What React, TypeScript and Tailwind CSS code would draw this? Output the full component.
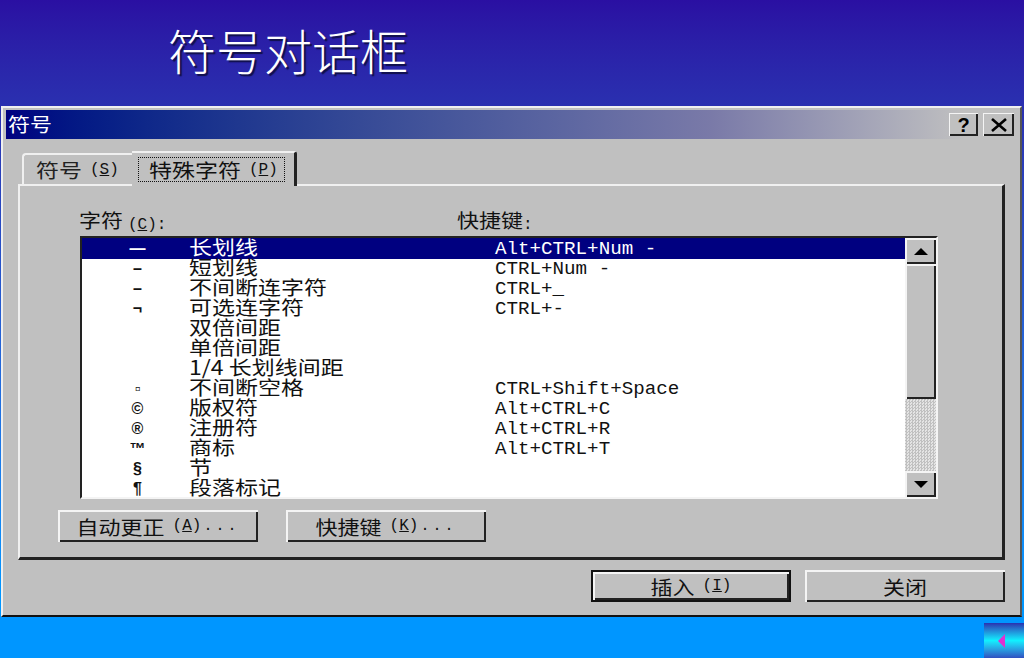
import type { ReactNode } from 'react'

const CJK = "font-['Noto_Sans_CJK_SC','Liberation_Sans',sans-serif]"

const ROWS = [
  { sym: '—', name: '长划线', keys: 'Alt+CTRL+Num -' },
  { sym: '–', name: '短划线', keys: 'CTRL+Num -' },
  { sym: '–', name: '不间断连字符', keys: 'CTRL+_' },
  { sym: '¬', name: '可选连字符', keys: 'CTRL+-' },
  { sym: '', name: '双倍间距', keys: '' },
  { sym: '', name: '单倍间距', keys: '' },
  { sym: '', name: '1/4 长划线间距', keys: '' },
  { sym: '▫', name: '不间断空格', keys: 'CTRL+Shift+Space' },
  { sym: '©', name: '版权符', keys: 'Alt+CTRL+C' },
  { sym: '®', name: '注册符', keys: 'Alt+CTRL+R' },
  { sym: '™', name: '商标', keys: 'Alt+CTRL+T' },
  { sym: '§', name: '节', keys: '' },
  { sym: '¶', name: '段落标记', keys: '' },
]

// the bitmap font in the picture is wider than tall
function Sq({ children }: { children: ReactNode }) {
  return <span className="inline-block scale-y-[.86]">{children}</span>
}

// "(S)" style access key, small and underlined
function Hot({ k }: { k: string }) {
  return (
    <span className="font-['Liberation_Mono',monospace] text-[16px] text-[#111] ml-2">
      (<span className="underline">{k}</span>)
    </span>
  )
}

function Dots() {
  return <span className="font-['Liberation_Mono',monospace] text-[15px] tracking-[3px] ml-[2px]">...</span>
}

function Btn({ children, w = 'w-[200px]' }: { children: ReactNode; w?: string }) {
  return (
    <div className={`${w} h-[32px] flex items-center justify-center bg-[#c0c0c0] text-[22px] leading-none text-[#111] shadow-[inset_2px_2px_0_#f4f4f4,inset_-2px_-2px_0_#222]`}>
      {children}
    </div>
  )
}

export default function App() {
  return (
    <div className={`w-[1024px] h-[658px] overflow-hidden flex flex-col bg-gradient-to-b from-[#2a30b0] from-[16%] to-[#0096ff] to-[90%] ${CJK}`}>
      <div className="h-[106px] shrink-0 pl-[168px] pt-[19px] bg-gradient-to-b from-[#2a0fa2] to-[#2a30b0]">
        <h1 className="text-[48px] leading-[60px] font-light text-white [text-shadow:2px_2px_1px_#10104a]">符号对话框</h1>
      </div>

      <div className="h-[511px] shrink-0 ml-[1px] mr-[2px] bg-[#c0c0c0] border-t-2 border-l-2 border-t-[#f0f0f0] border-l-[#f0f0f0] border-b-2 border-b-[#111] border-r-2 border-r-[#555] pt-[2px] pl-[3px] pr-[2px] flex flex-col">
        <div className="h-[29px] shrink-0 mr-[3px] flex items-center justify-between bg-gradient-to-r from-[#000080] via-[#7a7aa8] via-70% to-[#c0c0c0] to-95%">
          <span className="text-white text-[22px] leading-none pl-[2px] pb-[4px]"><Sq>符号</Sq></span>
          <div className="flex gap-[5px] pr-[1px]">
            <div className="w-[29px] h-[23px] flex items-center justify-center bg-[#c0c0c0] text-black font-bold text-[20px] font-['Liberation_Sans',sans-serif] shadow-[inset_1px_1px_0_#f4f4f4,inset_-2px_-2px_0_#222]">?</div>
            <div className="w-[31px] h-[23px] flex items-center justify-center bg-[#c0c0c0] shadow-[inset_1px_1px_0_#f4f4f4,inset_-2px_-2px_0_#222]">
              <svg width="18" height="14" viewBox="0 0 18 14"><path d="M2 1L16 13M16 1L2 13" stroke="#000" strokeWidth="2.6" /></svg>
            </div>
          </div>
        </div>

        {/* tabs */}
        <div className="h-[45px] shrink-0 ml-[12px] flex items-end relative z-10">
          <div className="ml-[4px] w-[110px] h-[31px] bg-[#c0c0c0] border-t-2 border-l-2 border-[#f0f0f0] rounded-tl-[4px] flex items-center pl-[12px] text-[23px] leading-none text-[#222]">
            <Sq>符号</Sq><Hot k="S" />
          </div>
          <div className="w-[165px] h-[35px] -mb-[2px] bg-[#c0c0c0] border-t-2 border-[#f0f0f0] border-r-[3px] border-r-[#222] rounded-tr-[3px] flex items-center pl-[6px]">
            <div className="w-[147px] h-[25px] border border-dotted border-[#111] flex items-center pl-[10px] text-[23px] leading-none text-[#111] whitespace-nowrap">
              <Sq>特殊字符</Sq><Hot k="P" />
            </div>
          </div>
        </div>

        <div className="h-[376px] shrink-0 ml-[12px] mr-[13px] border-t-2 border-l-2 border-[#f0f0f0] border-r-[3px] border-r-[#222] border-b-[3px] border-b-[#222] px-[60px] flex flex-col">
          <div className="h-[50px] shrink-0 -ml-[1px] flex items-end pb-[3px] text-[22px] text-[#111] leading-none">
            <div className="w-[378px]"><Sq>字符</Sq> <span className="font-['Liberation_Mono',monospace] text-[16px]">(<span className="underline">C</span>):</span></div>
            <div><Sq>快捷键</Sq><span className="font-['Liberation_Mono',monospace] text-[16px]">:</span></div>
          </div>

          <div className="w-[858px] h-[263px] shrink-0 border-t-2 border-l-2 border-[#222] border-r-2 border-r-[#f4f4f4] border-b-2 border-b-[#f4f4f4] bg-white flex overflow-hidden">
            <div className="w-[823px] shrink-0 overflow-hidden">
              {ROWS.map((r, i) => (
                <div key={i} className={`h-[20px] flex items-center whitespace-nowrap ${i === 0 ? 'h-[21px] bg-[#000080] text-white' : 'text-[#111]'}`}>
                  <div className="w-[107px] shrink-0 pl-[42px] text-[16px] font-bold leading-[20px] text-center pr-[38px] font-['Liberation_Sans',sans-serif]">{r.sym}</div>
                  <div className="w-[306px] shrink-0 text-[23px] leading-[20px] pb-[6px]"><Sq>{r.name}</Sq></div>
                  <div className="font-['Liberation_Mono',monospace] text-[19.2px] leading-[20px]">{r.keys}</div>
                </div>
              ))}
            </div>
            <div className="w-[31px] shrink-0 flex flex-col">
              <div className="h-[26px] shrink-0 bg-[#c0c0c0] flex items-center justify-center shadow-[inset_2px_2px_0_#f4f4f4,inset_-2px_-2px_0_#222]">
                <div className="w-0 h-0 border-x-[7px] border-x-transparent border-b-[7px] border-b-black" />
              </div>
              <div className="h-[135px] shrink-0 bg-[#c0c0c0] shadow-[inset_2px_2px_0_#f4f4f4,inset_-2px_-2px_0_#222]" />
              <div className="flex-1 bg-[repeating-conic-gradient(#c0c0c0_0_25%,#e4e4e4_0_50%)] bg-[length:3px_3px]" />
              <div className="h-[26px] shrink-0 bg-[#c0c0c0] flex items-center justify-center shadow-[inset_2px_2px_0_#f4f4f4,inset_-2px_-2px_0_#222]">
                <div className="w-0 h-0 border-x-[7px] border-x-transparent border-t-[7px] border-t-black" />
              </div>
            </div>
          </div>

          <div className="flex gap-[28px] -ml-[22px] mt-[11px]">
            <Btn><Sq>自动更正</Sq><Hot k="A" /><Dots /></Btn>
            <Btn><Sq>快捷键</Sq><Hot k="K" /><Dots /></Btn>
          </div>
        </div>

        <div className="flex justify-end gap-[14px] mt-[10px] mr-[13px]">
          <div className="border-2 border-[#111]">
            <Btn w="w-[196px] !h-[28px]"><Sq>插入</Sq><Hot k="I" /></Btn>
          </div>
          <Btn><Sq>关闭</Sq></Btn>
        </div>
      </div>

      <div className="flex-1 flex justify-end items-end bg-[#0096ff]">
        <div className="w-[40px] h-[35px] pr-[4px] flex items-center justify-center bg-gradient-to-b from-[#2a30b0] via-[#10f0ff] to-[#3050c0]">
          <svg width="8" height="14" viewBox="0 0 8 14"><polygon points="7,0 7,14 0,7" fill="#e030d0" /></svg>
        </div>
      </div>
    </div>
  )
}
